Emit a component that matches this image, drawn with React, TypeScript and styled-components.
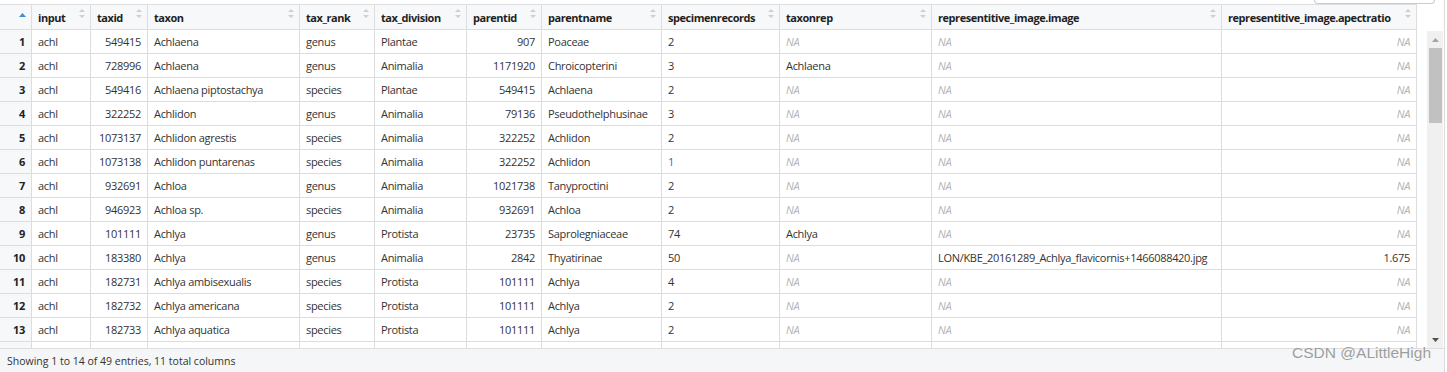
import React from 'react';
import styled, { createGlobalStyle } from 'styled-components';

const GlobalStyle = createGlobalStyle`
  html, body {
    margin: 0;
    padding: 0;
    background: #ffffff;
  }
  body {
    font-family: 'Open Sans', 'Noto Sans', Arial, sans-serif;
    color: #333333;
  }
`;

type Align = 'left' | 'right';

type Column = {
  key: string;
  label: string;
  width: number;
  align: Align;
};

const columns: Column[] = [
  { key: 'input', label: 'input', width: 59, align: 'left' },
  { key: 'taxid', label: 'taxid', width: 57, align: 'right' },
  { key: 'taxon', label: 'taxon', width: 152, align: 'left' },
  { key: 'tax_rank', label: 'tax_rank', width: 75, align: 'left' },
  { key: 'tax_division', label: 'tax_division', width: 92, align: 'left' },
  { key: 'parentid', label: 'parentid', width: 75, align: 'right' },
  { key: 'parentname', label: 'parentname', width: 120, align: 'left' },
  { key: 'specimenrecords', label: 'specimenrecords', width: 118, align: 'left' },
  { key: 'taxonrep', label: 'taxonrep', width: 152, align: 'left' },
  { key: 'image', label: 'representitive_image.image', width: 290, align: 'left' },
  { key: 'ratio', label: 'representitive_image.apectratio', width: 195, align: 'right' },
];

const ROWNUM_WIDTH = 32;
const template = `${ROWNUM_WIDTH}px ${columns.map((c) => `${c.width}px`).join(' ')}`;

type Row = (string | null)[];

const rows: Row[] = [
  ['achl', '549415', 'Achlaena', 'genus', 'Plantae', '907', 'Poaceae', '2', null, null, null],
  ['achl', '728996', 'Achlaena', 'genus', 'Animalia', '1171920', 'Chroicopterini', '3', 'Achlaena', null, null],
  ['achl', '549416', 'Achlaena piptostachya', 'species', 'Plantae', '549415', 'Achlaena', '2', null, null, null],
  ['achl', '322252', 'Achlidon', 'genus', 'Animalia', '79136', 'Pseudothelphusinae', '3', null, null, null],
  ['achl', '1073137', 'Achlidon agrestis', 'species', 'Animalia', '322252', 'Achlidon', '2', null, null, null],
  ['achl', '1073138', 'Achlidon puntarenas', 'species', 'Animalia', '322252', 'Achlidon', '1', null, null, null],
  ['achl', '932691', 'Achloa', 'genus', 'Animalia', '1021738', 'Tanyproctini', '2', null, null, null],
  ['achl', '946923', 'Achloa sp.', 'species', 'Animalia', '932691', 'Achloa', '2', null, null, null],
  ['achl', '101111', 'Achlya', 'genus', 'Protista', '23735', 'Saprolegniaceae', '74', 'Achlya', null, null],
  ['achl', '183380', 'Achlya', 'genus', 'Animalia', '2842', 'Thyatirinae', '50', null, 'LON/KBE_20161289_Achlya_flavicornis+1466088420.jpg', '1.675'],
  ['achl', '182731', 'Achlya ambisexualis', 'species', 'Protista', '101111', 'Achlya', '4', null, null, null],
  ['achl', '182732', 'Achlya americana', 'species', 'Protista', '101111', 'Achlya', '2', null, null, null],
  ['achl', '182733', 'Achlya aquatica', 'species', 'Protista', '101111', 'Achlya', '2', null, null, null],
];

// the next row is only a few pixels tall on screen, so its cells stay empty
const PEEK_ROW: Row = columns.map(() => '');

const Page = styled.div`
  position: relative;
  width: 1444px;
  height: 372px;
  border-right: 1px solid #dddddd;
  display: flex;
  flex-direction: column;
  overflow: hidden;
`;

const FilterStrip = styled.div`
  height: 4px;
  display: flex;
  justify-content: flex-end;
  padding-right: 9px;
`;

const SearchBox = styled.div`
  width: 119px;
  height: 3px;
  border: 1px solid #cccccc;
  border-top: none;
  border-radius: 0 0 4px 4px;
`;

const HeadLine = styled.div`
  display: flex;
`;

const GridRow = styled.div`
  display: grid;
  grid-template-columns: ${template};
  flex: none;
`;

const HeadRow = styled(GridRow)`
  height: 26px;
  border-top: 1px solid #dddddd;
  box-sizing: border-box;
`;

const HeadCell = styled.div<{ $first?: boolean }>`
  display: flex;
  justify-content: ${({ $first }) => ($first ? 'flex-end' : 'space-between')};
  align-items: center;
  padding: 0 5px 0 6px;
  background: #f6f8f9;
  border-right: 1px solid #dddddd;
  border-bottom: 1px solid #dddddd;
  box-sizing: border-box;
  font-size: 11px;
  font-weight: 700;
  letter-spacing: -0.45px;
  color: #1f1f1f;
  white-space: nowrap;
  overflow: hidden;
`;

const SortMark = styled.svg`
  flex: none;
  align-self: flex-start;
  margin-top: 4px;
`;

const ActiveSortMark = styled.svg`
  flex: none;
  align-self: flex-start;
  margin-top: 8px;
`;

const Body = styled.div`
  display: flex;
  height: 318px;
`;

const RowsPane = styled.div`
  display: flex;
  flex-direction: column;
  overflow: hidden;
`;

const DataRow = styled(GridRow)`
  height: 24px;
`;

const Cell = styled.div<{ $align: Align }>`
  display: flex;
  align-items: center;
  justify-content: ${({ $align }) => ($align === 'right' ? 'flex-end' : 'flex-start')};
  padding: 0 6px;
  border-right: 1px solid #dddddd;
  border-bottom: 1px solid #dddddd;
  box-sizing: border-box;
  font-size: 11px;
  letter-spacing: -0.3px;
  color: #333333;
  white-space: nowrap;
  overflow: hidden;
`;

const RowNum = styled(Cell)`
  background: #f6f8f9;
  font-weight: 700;
  color: #222222;
`;

const Missing = styled.span`
  color: #b3b3b3;
  font-style: italic;
`;

const Highlight = styled.span`
  color: #2f6dbd;
`;

const ScrollTrack = styled.div`
  width: 16px;
  margin-left: 10px;
  margin-top: 1px;
  background: #f0f0f0;
  display: flex;
  flex-direction: column;
  align-items: center;
`;

const ScrollArrow = styled.div`
  height: 17px;
  width: 16px;
  display: flex;
  align-items: center;
  justify-content: center;
`;

const ScrollThumb = styled.div`
  width: 13px;
  height: 75px;
  background: #c1c1c1;
`;

const ScrollSpace = styled.div`
  flex: 1;
`;

const Footer = styled.div`
  height: 24px;
  border-top: 1px solid #dddddd;
  background: #f4f6f7;
  display: flex;
  align-items: center;
  padding-left: 7px;
  font-size: 10.5px;
  color: #333333;
`;

const Watermark = styled.div`
  position: absolute;
  right: 13px;
  bottom: 10px;
  font-family: 'Liberation Sans', Arial, sans-serif;
  font-size: 15.5px;
  color: #9d9d9d;
  text-shadow: 0 0 1px #ffffff;
`;

const SortIcon = () => (
  <SortMark width="6" height="9" viewBox="0 0 6 9">
    <polygon points="0,3 3,0 6,3" fill="#cfcfcf" />
    <polygon points="0,6 3,9 6,6" fill="#cfcfcf" />
  </SortMark>
);

const renderValue = (v: string | null, hot: boolean) => {
  if (v === null) return <Missing>NA</Missing>;
  if (hot) return <Highlight>{v}</Highlight>;
  return v;
};

export default function App() {
  return (
    <>
      <GlobalStyle />
      <Page>
        <FilterStrip>
          <SearchBox />
        </FilterStrip>
        <HeadLine>
          <HeadRow>
            <HeadCell $first>
              <ActiveSortMark width="7" height="4" viewBox="0 0 7 4">
                <polygon points="0,4 3.5,0 7,4" fill="#3c8fde" />
              </ActiveSortMark>
            </HeadCell>
            {columns.map((c) => (
              <HeadCell key={c.key}>
                <span>{c.label}</span>
                <SortIcon />
              </HeadCell>
            ))}
          </HeadRow>
        </HeadLine>
        <Body>
          <RowsPane>
            {rows.map((row, i) => (
              <DataRow key={i}>
                <RowNum $align="right">{i + 1}</RowNum>
                {columns.map((c, j) => (
                  <Cell key={c.key} $align={c.align}>
                    {renderValue(row[j], i === 5 && c.key === 'specimenrecords')}
                  </Cell>
                ))}
              </DataRow>
            ))}
            <DataRow>
              <RowNum $align="right" />
              {columns.map((c, j) => (
                <Cell key={c.key} $align={c.align}>
                  {PEEK_ROW[j]}
                </Cell>
              ))}
            </DataRow>
          </RowsPane>
          <ScrollTrack>
            <ScrollArrow>
              <svg width="7" height="4" viewBox="0 0 7 4">
                <polygon points="0,4 3.5,0 7,4" fill="#a3a3a3" />
              </svg>
            </ScrollArrow>
            <ScrollThumb />
            <ScrollSpace />
            <ScrollArrow>
              <svg width="7" height="4" viewBox="0 0 7 4">
                <polygon points="0,0 3.5,4 7,0" fill="#505050" />
              </svg>
            </ScrollArrow>
          </ScrollTrack>
        </Body>
        <Footer>Showing 1 to 14 of 49 entries, 11 total columns</Footer>
        <Watermark>CSDN @ALittleHigh</Watermark>
      </Page>
    </>
  );
}
